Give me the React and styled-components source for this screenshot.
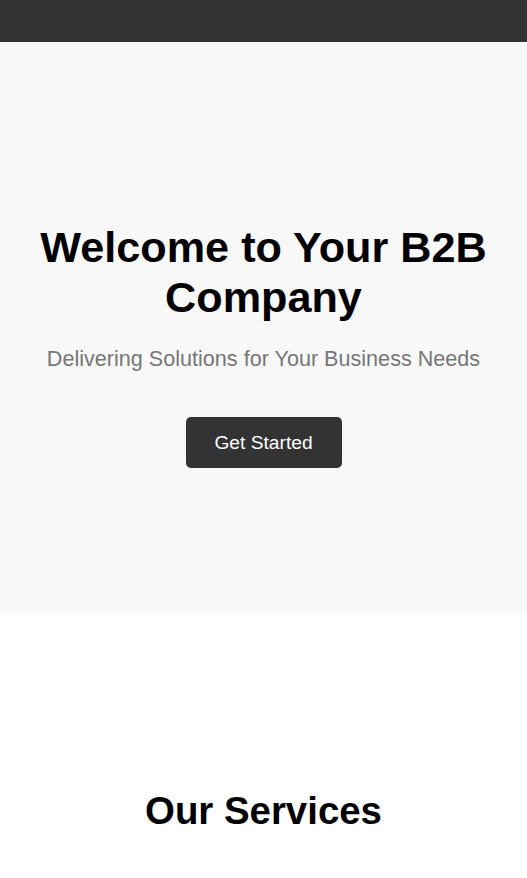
import React from 'react';
import styled, { createGlobalStyle } from 'styled-components';

const GlobalStyle = createGlobalStyle`
  * {
    box-sizing: border-box;
  }

  body {
    margin: 0;
    font-family: "Liberation Sans", Arial, sans-serif;
    background: #fff;
  }
`;

const Header = styled.header`
  height: 42px;
  background: #333;
`;

const Hero = styled.section`
  height: 570px;
  background: #f8f8f8;
  display: flex;
  flex-direction: column;
  align-items: center;
  text-align: center;
  padding: 180px 20px 0;
`;

const Title = styled.h1`
  margin: 0;
  font-size: 43.2px;
  line-height: 50px;
  font-weight: bold;
  color: #000;
`;

const Subtitle = styled.p`
  margin: 24px 0 0;
  font-size: 21.6px;
  color: #777;
`;

const Button = styled.button`
  margin-top: 45px;
  width: 156px;
  height: 51px;
  border: none;
  border-radius: 5px;
  background: #333;
  color: #fff;
  font-family: inherit;
  font-size: 19.2px;
  cursor: pointer;
`;

const Services = styled.section`
  padding: 177px 20px 40px;
  text-align: center;
`;

const SectionTitle = styled.h2`
  margin: 0;
  font-size: 38.4px;
  font-weight: bold;
  color: #000;
`;

export default function App() {
  return (
    <>
      <GlobalStyle />
      <Header />
      <Hero>
        <Title>Welcome to Your B2B Company</Title>
        <Subtitle>Delivering Solutions for Your Business Needs</Subtitle>
        <Button>Get Started</Button>
      </Hero>
      <Services>
        <SectionTitle>Our Services</SectionTitle>
      </Services>
    </>
  );
}
